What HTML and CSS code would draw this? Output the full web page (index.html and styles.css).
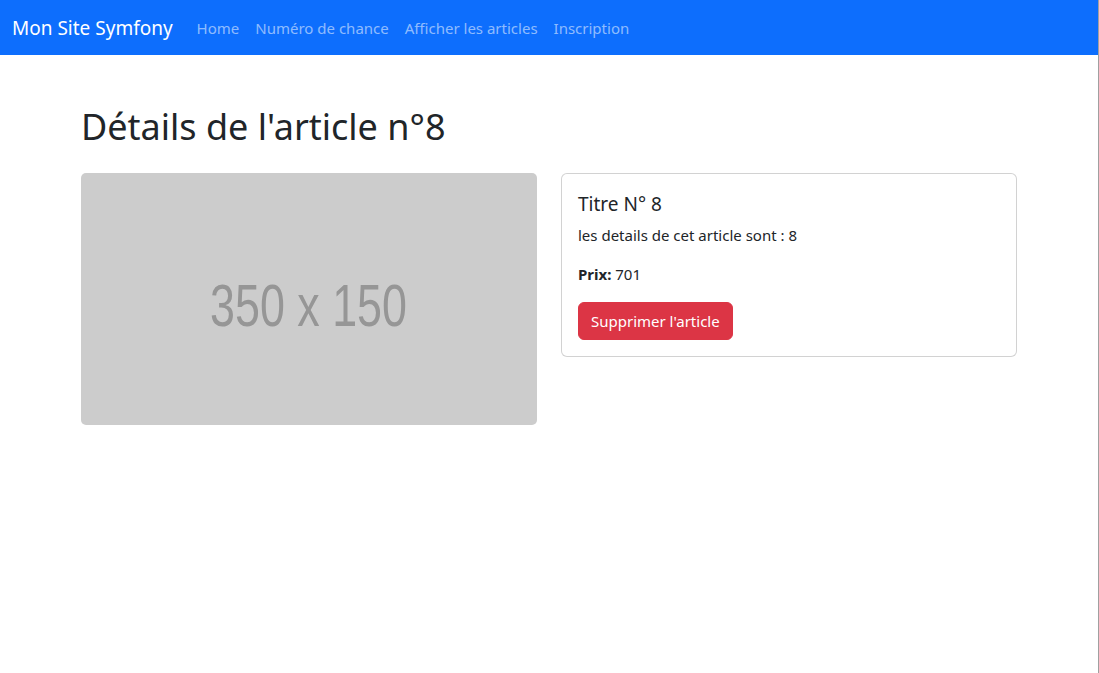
FILE: index.html
```html
<!DOCTYPE html>
<html lang="fr">
<head>
<meta charset="utf-8">
<title>Détails de l'article n°8</title>
<link rel="stylesheet" href="styles.css">
</head>
<body>
<div class="page">
  <nav class="navbar">
    <a class="brand" href="#">Mon Site Symfony</a>
    <ul class="nav">
      <li><a class="nav-link" href="#">Home</a></li>
      <li><a class="nav-link" href="#">Numéro de chance</a></li>
      <li><a class="nav-link" href="#">Afficher les articles</a></li>
      <li><a class="nav-link" href="#">Inscription</a></li>
    </ul>
  </nav>
  <main class="container">
    <h1 class="title">Détails de l'article n°8</h1>
    <div class="row">
      <div class="col">
        <div class="placeholder">
          <svg class="placeholder-svg" width="456" height="252" viewBox="0 0 456 252" aria-label="350 x 150">
            <text x="129" y="153" textLength="197" lengthAdjust="spacingAndGlyphs" class="placeholder-text">350 x 150</text>
          </svg>
        </div>
      </div>
      <div class="col">
        <div class="card">
          <div class="card-body">
            <h5 class="card-title">Titre N° 8</h5>
            <p class="card-text desc">les details de cet article sont : 8</p>
            <p class="card-text price"><strong>Prix:</strong> 701</p>
            <button class="btn-danger" type="button">Supprimer l'article</button>
          </div>
        </div>
      </div>
    </div>
  </main>
</div>
</body>
</html>
```
FILE: styles.css
```css
* { box-sizing: border-box; }
html, body { margin: 0; padding: 0; background: #fff; }
body {
  font-family: "Noto Sans", "Open Sans", sans-serif;
  font-size: 15px;
  line-height: 24px;
  color: #212529;
}
.page {
  width: 1099px;
  min-height: 673px;
  border-right: 1px solid #a0a0a0;
}
.navbar {
  height: 55px;
  background: #0d6efd;
  display: flex;
  align-items: center;
  padding: 0 12px;
}
.brand {
  color: #fff;
  text-decoration: none;
  font-size: 19px;
  line-height: 30px;
  margin-right: 16px;
  white-space: nowrap;
}
.nav {
  list-style: none;
  margin: 0;
  padding: 0;
  display: flex;
}
.nav-link {
  display: block;
  padding: 8px;
  font-size: 15px;
  color: rgba(255, 255, 255, 0.55);
  text-decoration: none;
  white-space: nowrap;
}
.container {
  width: 960px;
  margin: 0 auto;
  padding: 0 12px;
}
.title {
  margin: 48px 0 22px;
  font-size: 36px;
  font-weight: 400;
  line-height: 48px;
}
.row {
  display: grid;
  grid-template-columns: 1fr 1fr;
  column-gap: 24px;
  align-items: start;
}
.placeholder {
  height: 252px;
  background: #cccccc;
  border-radius: 5px;
  overflow: hidden;
}
.placeholder-svg { display: block; }
.placeholder-text {
  font-family: "Liberation Sans", Arial, sans-serif;
  font-size: 60px;
  fill: #969696;
}
.card {
  border: 1px solid rgba(0, 0, 0, 0.175);
  border-radius: 6px;
  background: #fff;
}
.card-body { padding: 16px; }
.card-title {
  margin: 0 0 7px;
  padding-top: 2px;
  font-size: 19px;
  font-weight: 400;
  line-height: 24px;
}
.card-text { margin: 0 0 16px; }
.card-text.desc { margin-bottom: 15px; }
.card-text.price { margin-bottom: 16px; }
.card-text strong { font-weight: 700; }
.btn-danger {
  font-family: inherit;
  font-size: 15px;
  line-height: 24px;
  color: #fff;
  background: #dc3545;
  border: 1px solid #dc3545;
  border-radius: 6px;
  padding: 6px 12px;
  cursor: pointer;
}
```
